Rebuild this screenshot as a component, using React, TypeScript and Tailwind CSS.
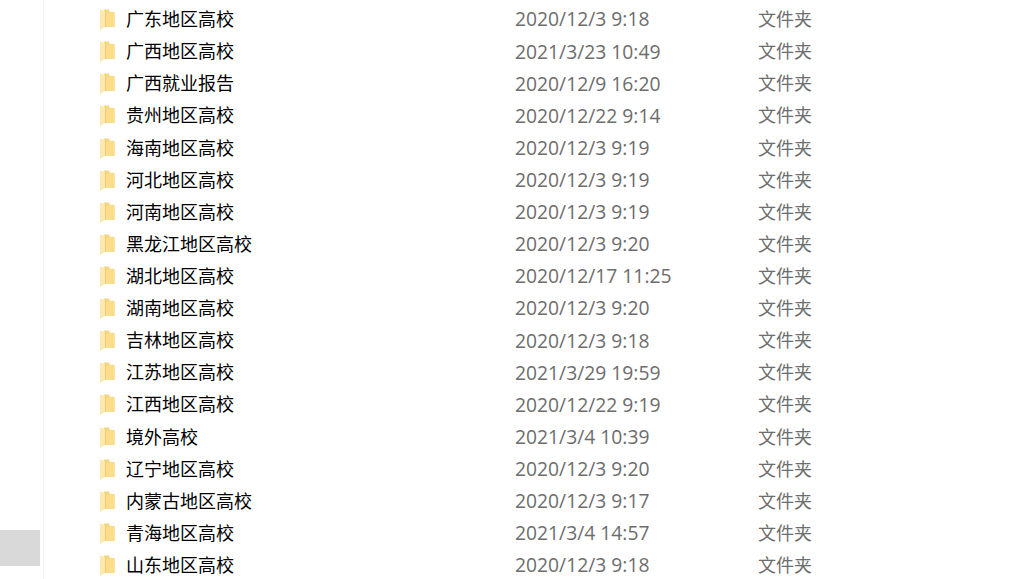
const rows = [
  ['广东地区高校', '2020/12/3 9:18'],
  ['广西地区高校', '2021/3/23 10:49'],
  ['广西就业报告', '2020/12/9 16:20'],
  ['贵州地区高校', '2020/12/22 9:14'],
  ['海南地区高校', '2020/12/3 9:19'],
  ['河北地区高校', '2020/12/3 9:19'],
  ['河南地区高校', '2020/12/3 9:19'],
  ['黑龙江地区高校', '2020/12/3 9:20'],
  ['湖北地区高校', '2020/12/17 11:25'],
  ['湖南地区高校', '2020/12/3 9:20'],
  ['吉林地区高校', '2020/12/3 9:18'],
  ['江苏地区高校', '2021/3/29 19:59'],
  ['江西地区高校', '2020/12/22 9:19'],
  ['境外高校', '2021/3/4 10:39'],
  ['辽宁地区高校', '2020/12/3 9:20'],
  ['内蒙古地区高校', '2020/12/3 9:17'],
  ['青海地区高校', '2021/3/4 14:57'],
  ['山东地区高校', '2020/12/3 9:18'],
];

function FolderIcon() {
  return (
    <svg width="15" height="21" viewBox="0 0 15 21" className="shrink-0">
      <path d="M4 0.5h5l1 2.5h4.5V18H4z" fill="#f5d67c" />
      <path d="M5 3.5h9.5V18H5z" fill="#fbdd8a" />
      <path d="M0 0.5L5 2V18L0 21z" fill="#fde9b0" />
      <path d="M5.5 2V18" stroke="#efcd70" strokeWidth="1" fill="none" />
    </svg>
  );
}

export default function App() {
  return (
    <div className="flex h-[579px] w-[1030px] overflow-hidden bg-white font-['Open_Sans','Noto_Sans_CJK_SC',sans-serif]">
      <div className="w-[44px] shrink-0 border-r border-[#f5f5f5] pt-[530px]">
        <div className="h-[36px] w-[40px] bg-[#d9d9d9]" />
      </div>
      <div className="pt-[3.6px] pl-[56px]">
        {rows.map(([name, date]) => (
          <div key={name} className="flex h-[32.11px] items-center text-[18px] leading-[27px]">
            <FolderIcon />
            <span className="ml-[11px] w-[389px] shrink-0 whitespace-nowrap text-black">{name}</span>
            <span className="w-[243px] shrink-0 whitespace-nowrap pb-[1.4px] text-[19.3px] text-[#6d6d6d]">{date}</span>
            <span className="whitespace-nowrap text-[#6d6d6d]">文件夹</span>
          </div>
        ))}
      </div>
    </div>
  );
}
